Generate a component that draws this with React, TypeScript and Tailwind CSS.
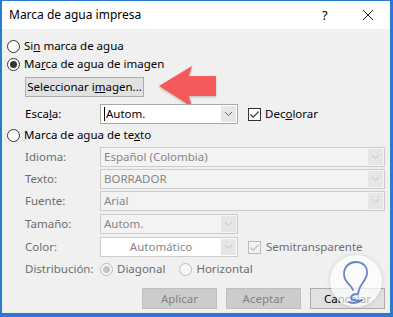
import React from "react";

function Radio({ checked = false, disabled = false }: { checked?: boolean; disabled?: boolean }) {
  return (
    <span
      className={`flex h-[13px] w-[13px] shrink-0 items-center justify-center rounded-full border ${
        disabled ? "border-[#bcbcbc] bg-[#f7f7f7]" : "border-[#333333] bg-white"
      }`}
    >
      {checked && (
        <span className={`h-[7px] w-[7px] rounded-full ${disabled ? "bg-[#c4c4c4]" : "bg-[#333333]"}`} />
      )}
    </span>
  );
}

function Check({ disabled = false }: { disabled?: boolean }) {
  return (
    <span
      className={`flex h-[13px] w-[13px] shrink-0 items-center justify-center border ${
        disabled ? "border-[#bcbcbc] bg-[#f3f3f3]" : "border-[#333333] bg-white"
      }`}
    >
      <svg width="11" height="11" viewBox="0 0 11 11" fill="none">
        <path d="M1.5 5.5 L4.2 8.2 L9.6 2.6" stroke={disabled ? "#bcbcbc" : "#333333"} strokeWidth="1.2" />
      </svg>
    </span>
  );
}

function Chevron({ disabled = false }: { disabled?: boolean }) {
  return (
    <svg width="9" height="6" viewBox="0 0 9 6" fill="none">
      <path d="M1 1 L4.5 4.5 L8 1" stroke={disabled ? "#c2c2c2" : "#6a6a6a"} strokeWidth="1" />
    </svg>
  );
}

function Combo({
  value,
  width,
  disabled = false,
  white = false,
  center = false,
  caret = false,
}: {
  value: string;
  width: string;
  disabled?: boolean;
  white?: boolean;
  center?: boolean;
  caret?: boolean;
}) {
  return (
    <div
      className={`flex h-[20px] ${width} items-stretch border ${
        disabled ? "border-[#cccccc]" : "border-[#a9a9a9]"
      } ${white ? "bg-white" : disabled ? "bg-[#f3f3f3]" : "bg-white"}`}
    >
      <div
        className={`flex flex-1 items-center whitespace-nowrap ${center ? "justify-center" : "pl-[3px]"} ${
          disabled ? "text-[#868686]" : "text-black"
        }`}
      >
        {caret && <span className="mr-px h-[14px] w-px bg-black" />}
        <span>{value}</span>
      </div>
      <div className="my-px mr-px flex w-[15px] items-center justify-center bg-[#e6e6e6]">
        <Chevron disabled={disabled} />
      </div>
    </div>
  );
}

function Field({ label, children }: { label: string; children: React.ReactNode }) {
  return (
    <div className="flex items-center">
      <span className="w-[75px] text-[#6d6d6d]">{label}</span>
      {children}
    </div>
  );
}

function Btn({ label, disabled = false }: { label: string; disabled?: boolean }) {
  return (
    <div
      className={`flex h-[21px] w-[75px] items-center justify-center border ${
        disabled ? "border-[#bfbfbf] bg-[#cccccc] text-[#838383]" : "border-[#adadad] bg-[#e1e1e1] text-black"
      }`}
    >
      <span>{label}</span>
    </div>
  );
}

export default function App() {
  return (
    <div className="flex h-[317px] w-[393px] flex-col border-t border-r-[3px] border-b-[4px] border-l-2 border-[#2b79d0] bg-[#f0f0f0] font-['Noto_Sans',sans-serif] text-[11.5px] leading-none text-black">
      {/* title bar */}
      <div className="flex h-[28px] shrink-0 items-center bg-white pl-[7px] text-[12px]">
        <span className="flex-1">Marca de agua impresa</span>
        <span className="w-[40px] text-[13px]">?</span>
        <svg width="12" height="12" viewBox="0 0 12 12" className="mr-[16px]">
          <path d="M1 1 L11 11 M11 1 L1 11" stroke="#222" strokeWidth="1" />
        </svg>
      </div>

      <div className="relative flex flex-1 flex-col pt-[8px] pl-[5px]">
        <div className="flex h-[18px] items-center gap-[4px]">
          <Radio />
          <span>
            Si<u>n</u> marca de agua
          </span>
        </div>
        <div className="flex h-[18px] items-center gap-[4px]">
          <Radio checked />
          <span>
            Ma<u>r</u>ca de agua de imagen
          </span>
        </div>

        <div className="ml-[18px] mt-[3px] flex items-center">
          <div className="flex h-[20px] w-[119px] items-center justify-center whitespace-nowrap border border-[#adadad] bg-[#e1e1e1]">
            <span>
              Seleccionar i<u>m</u>agen...
            </span>
          </div>
          {/* red pointer arrow */}
          <svg width="64" height="46" viewBox="0 0 64 46" className="ml-[12px] -my-[12px]">
            <defs>
              <filter id="sh" x="-20%" y="-20%" width="140%" height="140%">
                <feDropShadow dx="0" dy="1" stdDeviation="1.2" floodColor="#000" floodOpacity="0.25" />
              </filter>
            </defs>
            <polygon
              points="3,22 36,2 33,12 60,12 60,32 33,32 36,43"
              fill="#f45a5a"
              filter="url(#sh)"
            />
          </svg>
        </div>

        <div className="ml-[18px] mt-[6px] flex items-center">
          <span className="w-[75px]">
            Esca<u>l</u>a:
          </span>
          <Combo value="Autom." width="w-[138px]" caret />
          <div className="ml-[10px] flex items-center gap-[4px]">
            <Check />
            <span>
              Dec<u>o</u>lorar
            </span>
          </div>
        </div>

        <div className="mt-[2px] flex h-[18px] items-center gap-[4px]">
          <Radio />
          <span>
            Marca de agua de te<u>x</u>to
          </span>
        </div>

        <div className="ml-[18px] mt-[3px] flex flex-col gap-[2px]">
          <Field label="Idioma:">
            <Combo value="Español (Colombia)" width="w-[285px]" disabled />
          </Field>
          <Field label="Texto:">
            <Combo value="BORRADOR" width="w-[285px]" disabled />
          </Field>
          <Field label="Fuente:">
            <Combo value="Arial" width="w-[285px]" disabled />
          </Field>
        </div>

        <div className="ml-[18px] mt-[3px] flex flex-col gap-[3px]">
          <Field label="Tamaño:">
            <Combo value="Autom." width="w-[138px]" disabled />
          </Field>
          <Field label="Color:">
            <Combo value="Automático" width="w-[138px]" disabled white center />
            <div className="ml-[10px] flex items-center gap-[5px] text-[#6d6d6d]">
              <Check disabled />
              <span>Semitransparente</span>
            </div>
          </Field>
        </div>

        <div className="ml-[18px] mt-[3px] flex h-[18px] items-center text-[#6d6d6d]">
          <span className="w-[75px]">Distribución:</span>
          <div className="flex items-center gap-[4px]">
            <Radio checked disabled />
            <span>Diagonal</span>
          </div>
          <div className="ml-[14px] flex items-center gap-[4px]">
            <Radio disabled />
            <span>Horizontal</span>
          </div>
        </div>

        <div className="mt-[10px] flex justify-end gap-[9px] pr-[5px]">
          <Btn label="Aplicar" disabled />
          <Btn label="Aceptar" disabled />
          <Btn label="Cancelar" />
        </div>

        {/* watermark logo */}
        <div className="absolute right-[8px] bottom-[6px] flex h-[52px] w-[52px] items-center justify-center rounded-full bg-white/70 shadow-[0_0_4px_rgba(0,0,0,0.15)]">
          <svg width="40" height="48" viewBox="0 0 40 48" fill="none">
            <path
              d="M17 33 C16 28 8 26 8 17 C8 9 14 5 20 5 C27 5 32 10 31 17 C30 24 24 27 23 33 L22 37 C19 37 15 38 15 41 C16 44 22 44 26 43 C22 46 17 47 13 45"
              stroke="#4d72b8"
              strokeWidth="1.8"
              strokeLinecap="round"
              strokeLinejoin="round"
              opacity="0.85"
            />
          </svg>
        </div>
      </div>
    </div>
  );
}
